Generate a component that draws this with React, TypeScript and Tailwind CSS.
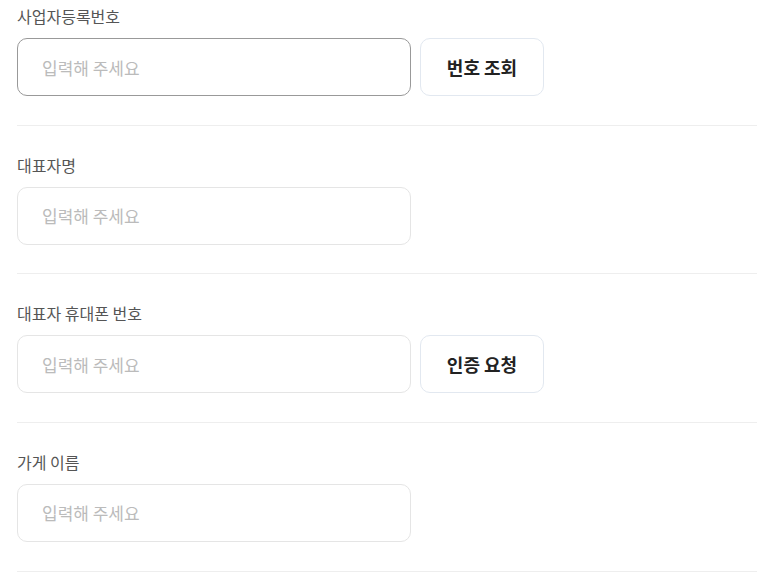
import { useState } from 'react';

type Field = {
  label: string;
  action?: string;
};

const fields: Field[] = [
  { label: '사업자등록번호', action: '번호 조회' },
  { label: '대표자명' },
  { label: '대표자 휴대폰 번호', action: '인증 요청' },
  { label: '가게 이름' },
];

export default function App() {
  const [values, setValues] = useState<string[]>(fields.map(() => ''));

  return (
    <div
      className="w-[758px] h-[576px] overflow-hidden bg-white"
      style={{ fontFamily: '"Noto Sans CJK KR", "Noto Sans", sans-serif' }}
    >
      <div className="ml-[17px] w-[740px]">
        {fields.map((field, idx) => (
          <div
            key={field.label}
            className={`${idx === 0 ? 'pt-[5px]' : 'pt-[28px]'} pb-[28.67px] border-b border-[#eeeeee]`}
          >
            <label className="block text-[16px] leading-[22px] text-[#555555]">{field.label}</label>
            <div className="flex gap-[9px] mt-[11px]">
              <input
                value={values[idx]}
                onChange={(e) => {
                  const next = [...values];
                  next[idx] = e.target.value;
                  setValues(next);
                }}
                placeholder="입력해 주세요"
                className={`w-[394px] h-[58px] rounded-[10px] border px-[24px] text-[17px] text-[#333333] placeholder:text-[#bbbbbb] outline-none
                  ${idx === 0 ? 'border-[#999999]' : 'border-[#e5e5e5]'}`}
              />
              {field.action && (
                <button className="w-[124px] h-[58px] rounded-[10px] border border-[#e2e8f0] bg-white text-[18px] font-bold text-[#222222]">
                  {field.action}
                </button>
              )}
            </div>
          </div>
        ))}
      </div>
    </div>
  );
}
